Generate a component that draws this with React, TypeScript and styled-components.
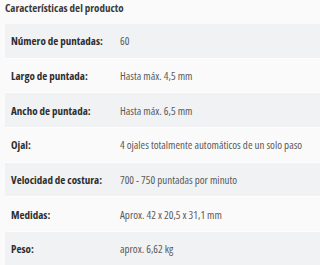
import React from "react";
import styled, { createGlobalStyle } from "styled-components";

const Global = createGlobalStyle`
  html, body { margin: 0; padding: 0; background: #fafafa; }
  body { font-family: "Open Sans", "Noto Sans", sans-serif; font-stretch: 80%; overflow: hidden; }
`;

const Page = styled.div`
  padding: 2px 0 0 5px;
  width: 330px;
`;

const Title = styled.h2`
  margin: 0;
  font-size: 11px;
  font-stretch: 76%;
  font-weight: 700;
  color: #3a3a3a;
  line-height: 12px;
  height: 22px;
`;

const Table = styled.div`
  display: flex;
  flex-direction: column;
`;

const Row = styled.div<{ $shaded: boolean }>`
  display: grid;
  grid-template-columns: 115px 1fr;
  align-items: center;
  height: 33.67px;
  border-bottom: 1px solid #fdfdfd;
  background: ${(p) => (p.$shaded ? "#f1f2f4" : "#fafafa")};
  white-space: nowrap;
`;

const Label = styled.div`
  padding-left: 6px;
  font-size: 11px;
  font-weight: 700;
  color: #2e2e2e;
`;

const Value = styled.div`
  font-size: 11px;
  color: #5a5a5a;
`;

const rows: [string, string][] = [
  ["Número de puntadas:", "60"],
  ["Largo de puntada:", "Hasta máx. 4,5 mm"],
  ["Ancho de puntada:", "Hasta máx. 6,5 mm"],
  ["Ojal:", "4 ojales totalmente automáticos de un solo paso"],
  ["Velocidad de costura:", "700 - 750 puntadas por minuto"],
  ["Medidas:", "Aprox. 42 x 20,5 x 31,1 mm"],
  ["Peso:", "aprox. 6,62 kg"],
];

export default function App() {
  return (
    <Page>
      <Global />
      <Title>Características del producto</Title>
      <Table>
        {rows.map(([l, v], i) => (
          <Row key={l} $shaded={i % 2 === 0}>
            <Label>{l}</Label>
            <Value>{v}</Value>
          </Row>
        ))}
      </Table>
    </Page>
  );
}
